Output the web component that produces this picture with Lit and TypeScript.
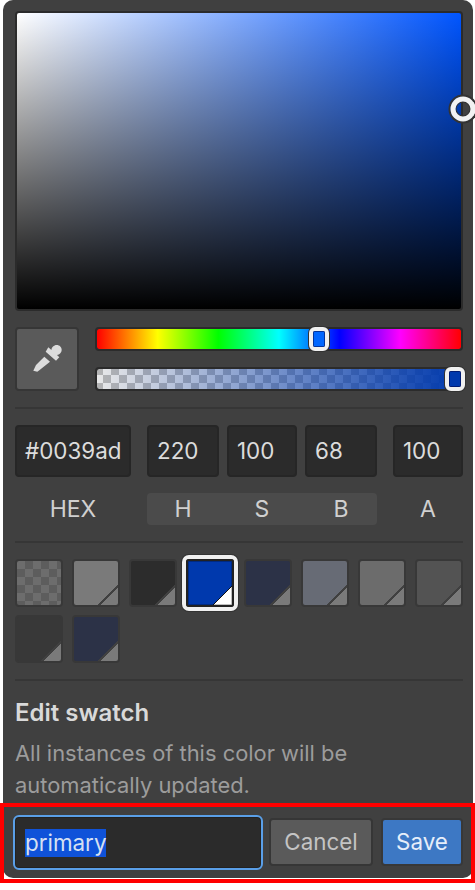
import { LitElement, html, css } from "lit";
import { customElement } from "lit/decorators.js";

const swatches = [
  { c: "", t: "#7a7a7a", cls: "checker" },
  { c: "#7a7a7a", t: "#7a7a7a" },
  { c: "#2c2c2c", t: "#7a7a7a" },
  { c: "#0039ad", t: "#ffffff", sel: true },
  { c: "#2c3247", t: "#7a7a7a" },
  { c: "#676b75", t: "#7a7a7a" },
  { c: "#6c6c6c", t: "#7a7a7a" },
  { c: "#535353", t: "#7a7a7a" },
  { c: "#383838", t: "#7a7a7a" },
  { c: "#2c3247", t: "#7a7a7a" },
];

@customElement("app-root")
export class AppRoot extends LitElement {
  static styles = css`
    :host {
      display: block;
      position: relative;
      height: 890px;
      overflow: hidden;
      background: #fff;
      font-family: Inter, "Liberation Sans", sans-serif;
      font-size: 22.4px;
      color: #d9d9d9;
    }
    .panel {
      margin: 0 2px 0 3px;
      background: #404040;
      border-radius: 10px;
      height: 878px;
      box-sizing: border-box;
      display: flex;
      flex-direction: column;
    }
    .body {
      flex: 1;
      min-height: 0;
      padding: 11px 10px 0 12px;
      display: flex;
      flex-direction: column;
      gap: 16px;
    }
    .sv {
      position: relative;
      height: 300px;
      flex: none;
      box-sizing: border-box;
      border: 2px solid #2b2b2b;
      border-radius: 4px;
      background:
        linear-gradient(to top, #000, transparent),
        linear-gradient(to right, #fff, #0055ff);
    }
    .sv-handle {
      position: absolute;
      width: 25px;
      height: 25px;
      box-sizing: border-box;
      transform: translate(-50%, -50%);
      border: 5px solid #f2f2f2;
      border-radius: 50%;
      box-shadow: 0 0 0 2px #333, inset 0 0 0 1px #333;
    }
    .controls {
      display: flex;
      gap: 16px;
      height: 64px;
      flex: none;
    }
    .dropper {
      width: 64px;
      height: 64px;
      box-sizing: border-box;
      background: #5a5a5a;
      border: 2px solid #363636;
      border-radius: 4px;
      display: flex;
      align-items: center;
      justify-content: center;
      padding: 0;
    }
    .dropper svg { display: block; margin-left: 2px; }
    .sliders {
      flex: 1;
      display: flex;
      flex-direction: column;
      justify-content: space-between;
    }
    .track {
      position: relative;
      height: 24px;
      box-sizing: border-box;
      border: 2px solid #2b2b2b;
      border-radius: 4px;
    }
    .hue {
      background: linear-gradient(to right, #f00, #ff0, #0f0, #0ff, #00f, #f0f, #f00) padding-box;
    }
    .alpha {
      background:
        linear-gradient(to right, rgba(0, 57, 173, 0), #0039ad) padding-box,
        repeating-conic-gradient(#e8e8e8 0 25%, #b4b4b4 0 50%) border-box 0 0 / 16px 16px;
      background-clip: padding-box;
    }
    .thumb {
      position: absolute;
      top: -2px;
      width: 20px;
      height: 24px;
      box-sizing: border-box;
      transform: translateX(-50%);
      border: 4px solid #f0f0f0;
      border-radius: 6px;
      box-shadow: 0 0 0 1px #333;
    }
    .thumb::after {
      content: "";
      position: absolute;
      inset: 0;
      border: 1px solid rgba(0, 0, 60, 0.5);
      border-radius: 1px;
    }
    hr {
      margin: 0;
      border: 0;
      height: 2px;
      flex: none;
      background: #363636;
    }
    .fields {
      display: flex;
      gap: 16px;
      flex: none;
    }
    .group {
      display: flex;
      flex-direction: column;
      gap: 16px;
    }
    .row {
      display: flex;
      gap: 8px;
    }
    .input {
      height: 52px;
      box-sizing: border-box;
      background: #2b2b2b;
      border: 2px solid #262626;
      border-radius: 4px;
      padding: 0 0 2px 8px;
      display: flex;
      align-items: center;
      color: #dcdcdc;
    }
    .w116 { width: 116px; }
    .w72 { width: 72px; }
    .w70 { width: 70px; }
    .lab {
      height: 32px;
      display: flex;
      align-items: center;
      justify-content: center;
      color: #d0d0d0;
      font-size: 23px;
    }
    .labs {
      background: #4b4b4b;
      border-radius: 4px;
    }
    .swatches {
      display: grid;
      grid-template-columns: repeat(8, 48px);
      justify-content: space-between;
      row-gap: 8px;
      flex: none;
    }
    .sw {
      width: 48px;
      height: 48px;
      box-sizing: border-box;
      border: 2px solid #383838;
      border-radius: 4px;
      background: linear-gradient(
        135deg,
        var(--c) 0 77%,
        #404040 77% 80%,
        var(--t) 80%
      );
    }
    .sw.sel {
      border-color: #222;
      background: linear-gradient(
        135deg,
        var(--c) 0 78%,
        #111 78% 79.5%,
        var(--t) 79.5%
      );
      box-shadow: 0 0 0 4px #f0f0f0, 0 0 0 5px #333, inset 0 0 0 1px rgba(0, 0, 0, 0.25);
      border-radius: 3px;
    }
    .sw.checker {
      background: repeating-conic-gradient(#5d5d5d 0 25%, #6d6d6d 0 50%) 0 0 / 16px 16px;
    }
    .edit {
      flex: none;
    }
    h3 {
      margin: 0 0 8px;
      font-size: 24px;
      font-weight: 600;
      line-height: 32px;
      color: #d9d9d9;
    }
    p {
      margin: 0;
      font-size: 21.9px;
      line-height: 32px;
      color: #9c9c9c;
    }
    .foot {
      flex: none;
      height: 75px;
      box-sizing: border-box;
      padding: 2px 10px 0 10px;
      display: flex;
      align-items: center;
      gap: 6px;
    }
    .name {
      width: 250px;
      height: 55px;
      margin-top: 1px;
      box-sizing: border-box;
      background: #2b2b2b;
      border: 2px solid #5a9fe8;
      border-radius: 6px;
      padding: 1px 10px 0;
      display: flex;
      align-items: center;
      box-shadow: inset 0 0 0 1px #222;
    }
    .name span {
      background: #0f52d9;
      color: #d6e0f2;
      line-height: 28px;
    }
    button {
      font: inherit;
      height: 48px;
      box-sizing: border-box;
      border-radius: 4px;
      padding: 0;
      border: 2px solid #363636;
    }
    .cancel { width: 104px; background: #5a5a5a; color: #c4c4c4; }
    .save { width: 82px; margin-left: 2px; background: #3d78c4; color: #e6eefa; border-color: #383838; }
    .mark {
      position: absolute;
      left: 0;
      top: 803px;
      width: 475px;
      height: 80px;
      box-sizing: border-box;
      border: 4.5px solid #f00;
      pointer-events: none;
    }
  `;

  render() {
    return html`
      <div class="panel">
        <div class="body">
          <div class="sv">
            <div class="sv-handle" style="left:calc(100% + 2px);top:32.5%"></div>
          </div>
          <div class="controls">
            <button class="dropper" aria-label="Eyedropper">
              <svg width="30" height="28" viewBox="0 0 30 28">
                <path fill="#dcdcdc" d="M15.3 2.3 L18.4 5 C18.6 2.4 20.8 0 23.7 0 C26.6 0 28.7 2.2 28.7 5 C28.7 7.6 26.6 9.7 24 10 L26.3 12.3 L23 15.7 L12.7 6.7 Z"/>
                <path fill="#dcdcdc" d="M11.3 11.7 L17 16.7 L6 25.6 L4.3 26.7 L0.3 25.7 L1.6 23 L3 20 Z"/>
              </svg>
            </button>
            <div class="sliders">
              <div class="track hue">
                <div class="thumb" style="left:61.1%;background:#0066ff"></div>
              </div>
              <div class="track alpha">
                <div class="thumb" style="left:98.3%;background:#0039ad"></div>
              </div>
            </div>
          </div>
          <hr />
          <div class="fields">
            <div class="group">
              <div class="input w116">#0039ad</div>
              <div class="lab">HEX</div>
            </div>
            <div class="group">
              <div class="row">
                <div class="input w72">220</div>
                <div class="input w70">100</div>
                <div class="input w72">68</div>
              </div>
              <div class="row labs">
                <div class="lab w72">H</div>
                <div class="lab w70">S</div>
                <div class="lab w72">B</div>
              </div>
            </div>
            <div class="group">
              <div class="input w70">100</div>
              <div class="lab">A</div>
            </div>
          </div>
          <hr />
          <div class="swatches">
            ${swatches.map(
              (s) => html`<div
                class="sw ${s.sel ? "sel" : ""} ${s.cls ?? ""}"
                style="--c:${s.c};--t:${s.t}"
              ></div>`
            )}
          </div>
          <hr />
          <div class="edit">
            <h3>Edit swatch</h3>
            <p>All instances of this color will be automatically updated.</p>
          </div>
        </div>
        <div class="foot">
          <div class="name"><span>primary</span></div>
          <button class="cancel">Cancel</button>
          <button class="save">Save</button>
        </div>
      </div>
      <div class="mark"></div>
    `;
  }
}
